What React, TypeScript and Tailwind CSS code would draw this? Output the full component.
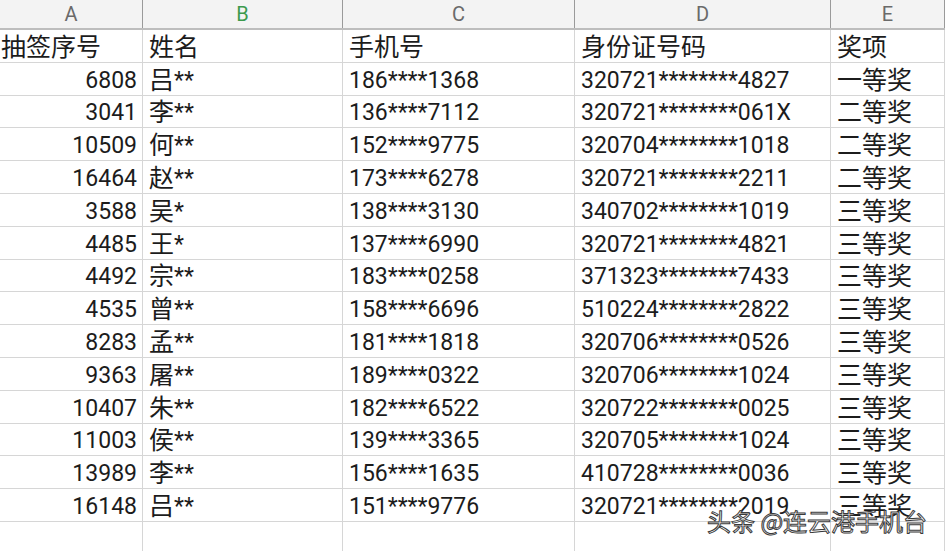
import React from "react";

type Row = [string, string, string, string, string];

const rows: Row[] = [
  ["6808", "吕**", "186****1368", "320721********4827", "一等奖"],
  ["3041", "李**", "136****7112", "320721********061X", "二等奖"],
  ["10509", "何**", "152****9775", "320704********1018", "二等奖"],
  ["16464", "赵**", "173****6278", "320721********2211", "二等奖"],
  ["3588", "吴*", "138****3130", "340702********1019", "三等奖"],
  ["4485", "王*", "137****6990", "320721********4821", "三等奖"],
  ["4492", "宗**", "183****0258", "371323********7433", "三等奖"],
  ["4535", "曾**", "158****6696", "510224********2822", "三等奖"],
  ["8283", "孟**", "181****1818", "320706********0526", "三等奖"],
  ["9363", "屠**", "189****0322", "320706********1024", "三等奖"],
  ["10407", "朱**", "182****6522", "320722********0025", "三等奖"],
  ["11003", "侯**", "139****3365", "320705********1024", "三等奖"],
  ["13989", "李**", "156****1635", "410728********0036", "三等奖"],
  ["16148", "吕**", "151****9776", "320721********2019", "三等奖"],
];

const cols = ["A", "B", "C", "D", "E"];
const gridCols = "grid grid-cols-[143px_200px_232px_256px_114px]";

// CJK glyphs sit a bit larger than the Roboto digits in the sheet
function Txt({ value }: { value: string }) {
  const parts = value.split(/([\u4e00-\u9fff]+)/).filter(Boolean);
  return (
    <>
      {parts.map((p, i) =>
        /[\u4e00-\u9fff]/.test(p) ? (
          <span key={i} className="text-[25px]">
            {p}
          </span>
        ) : (
          <span key={i}>{p}</span>
        )
      )}
    </>
  );
}

function Cell({ value, right, first }: { value: string; right?: boolean; first?: boolean }) {
  return (
    <div
      className={`flex items-center h-full pt-[3px] border-r border-b border-[#d6d6d6] whitespace-nowrap overflow-hidden ${
        right ? "justify-end pr-[5px]" : first ? "pl-[1px]" : "pl-[6px]"
      }`}
    >
      <Txt value={value} />
    </div>
  );
}

export default function App() {
  return (
    <div className="relative w-[945px] h-[551px] overflow-hidden bg-white text-[#1c1c1c] text-[23px] leading-none font-[family-name:Roboto,'Noto_Sans_CJK_SC',sans-serif]">
      {/* column letters */}
      <div className={`${gridCols} h-[30px] bg-[#f3f3f3] border-b-2 border-[#bdbdbd]`}>
        {cols.map((c) => (
          <div
            key={c}
            className={`flex items-center justify-center border-r border-[#9a9a9a] text-[20px] ${
              c === "B" ? "text-[#3c9a4c]" : "text-[#6a6a6a]"
            }`}
          >
            {c}
          </div>
        ))}
      </div>

      <div className={`${gridCols} h-[32.8px]`}>
        <Cell value="抽签序号" first />
        <Cell value="姓名" />
        <Cell value="手机号" />
        <Cell value="身份证号码" />
        <Cell value="奖项" />
      </div>

      {rows.map((r) => (
        <div key={r[0]} className={`${gridCols} h-[32.8px]`}>
          <Cell value={r[0]} right />
          <Cell value={r[1]} />
          <Cell value={r[2]} />
          <Cell value={r[3]} />
          <Cell value={r[4]} />
        </div>
      ))}

      <div className={`${gridCols} h-[40px]`}>
        {cols.map((c) => (
          <div key={c} className="border-r border-[#d6d6d6]" />
        ))}
      </div>

      {/* watermark */}
      <div className="absolute left-[707px] top-[509px] text-[24px] leading-none text-white [-webkit-text-stroke:1px_#3a3a3a] font-[family-name:'Noto_Sans_CJK_SC',sans-serif]">
        头条 @连云港手机台
      </div>
    </div>
  );
}
